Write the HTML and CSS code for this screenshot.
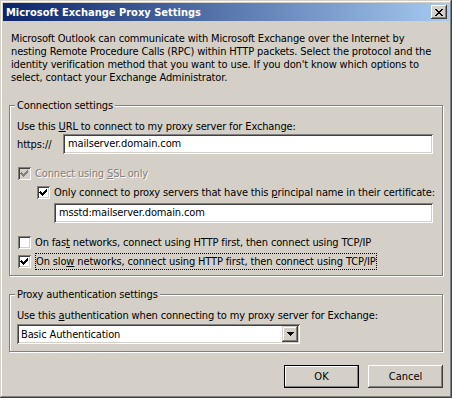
FILE: index.html
```html
<!DOCTYPE html>
<html lang="en">
<head>
    <meta charset="UTF-8">
    <title>Microsoft Exchange Proxy Settings</title>
    <link rel="stylesheet" href="styles.css">
</head>
<body>
<div class="window">
    <div class="titlebar">
        <span class="title">Microsoft Exchange Proxy Settings</span>
        <span class="close">
            <svg width="8" height="7" viewBox="0 0 8 7" shape-rendering="crispEdges">
                <path d="M0 0h2v1h1v1h2v-1h1v-1h2v1h-1v1h-1v1h-1v1h1v1h1v1h1v1h-2v-1h-1v-1h-2v1h-1v1h-2v-1h1v-1h1v-1h1v-1h-1v-1h-1v-1h-1z" fill="#000"/>
            </svg>
        </span>
    </div>

    <div class="content">
        <p class="intro">
            Microsoft Outlook can communicate with Microsoft Exchange over the Internet by<br>
            nesting Remote Procedure Calls (RPC) within HTTP packets. Select the protocol and the<br>
            identity verification method that you want to use. If you don't know which options to<br>
            select, contact your Exchange Administrator.
        </p>

        <fieldset class="group group-conn">
            <legend>Connection settings</legend>
            <div class="label">Use this <u>U</u>RL to connect to my proxy server for Exchange:</div>
            <div class="url-row">
                <span class="prefix">https://</span>
                <div class="field">mailserver.domain.com</div>
            </div>

            <div class="check check-ssl disabled">
                <span class="box">
                    <svg width="13" height="13" viewBox="0 0 13 13" shape-rendering="crispEdges"><path d="M3 5h1v1h1v1h1v-1h1v-1h1v-1h1v-1h1v3h-1v1h-1v1h-1v1h-1v1h-1v-1h-1v-1h-1v-1h-1z"/></svg>
                </span>
                <span>Connect using <u>S</u>SL only</span>
            </div>

            <div class="indent">
                <div class="check">
                    <span class="box">
                        <svg width="13" height="13" viewBox="0 0 13 13" shape-rendering="crispEdges"><path d="M3 5h1v1h1v1h1v-1h1v-1h1v-1h1v-1h1v3h-1v1h-1v1h-1v1h-1v1h-1v-1h-1v-1h-1v-1h-1z"/></svg>
                    </span>
                    <span>Only connect to proxy servers that have this <u>p</u>rincipal name in their certificate:</span>
                </div>
                <div class="field field-principal">msstd:mailserver.domain.com</div>
            </div>

            <div class="check check-fast">
                <span class="box"></span>
                <span>On fas<u>t</u> networks, connect using HTTP first, then connect using TCP/IP</span>
            </div>

            <div class="check check-slow">
                <span class="box">
                    <svg width="13" height="13" viewBox="0 0 13 13" shape-rendering="crispEdges"><path d="M3 5h1v1h1v1h1v-1h1v-1h1v-1h1v-1h1v3h-1v1h-1v1h-1v1h-1v1h-1v-1h-1v-1h-1v-1h-1z"/></svg>
                </span>
                <span class="focus">On slo<u>w</u> networks, connect using HTTP first, then connect using TCP/IP</span>
            </div>
        </fieldset>

        <fieldset class="group group-auth">
            <legend>Proxy authentication settings</legend>
            <div class="label">Use this <u>a</u>uthentication when connecting to my proxy server for Exchange:</div>
            <div class="select">
                <span class="select-text">Basic Authentication</span>
                <span class="drop">
                    <svg width="7" height="4" viewBox="0 0 7 4" shape-rendering="crispEdges"><path d="M0 0h7v1h-1v1h-1v1h-1v1h-1v-1h-1v-1h-1v-1h-1z"/></svg>
                </span>
            </div>
        </fieldset>

        <div class="buttons">
            <button class="btn btn-default">OK</button>
            <button class="btn">Cancel</button>
        </div>
    </div>
</div>
</body>
</html>
```

FILE: styles.css
```css
* {
    margin: 0;
    padding: 0;
    box-sizing: border-box;
}

body {
    background-color: #d4d0c8;
}

u {
    text-decoration: underline;
}

.window {
    width: 452px;
    height: 398px;
    padding: 3px;
    background-color: #d4d0c8;
    box-shadow: inset -1px -1px #404040, inset 1px 1px #d4d0c8, inset -2px -2px #808080, inset 2px 2px #fff;
    font-family: "DejaVu Sans Condensed", "DejaVu Sans", sans-serif;
    font-stretch: condensed;
    font-size: 11px;
    line-height: 13px;
    color: #000;
}

/* title bar */
.titlebar {
    height: 18px;
    display: flex;
    align-items: center;
    justify-content: space-between;
    padding: 0 2px;
    background: linear-gradient(to right, #0a246a, #a6caf0);
}

.title {
    padding-left: 1px;
    color: #fff;
    font-weight: bold;
}

.close {
    width: 16px;
    height: 14px;
    display: flex;
    align-items: center;
    justify-content: center;
    background-color: #d4d0c8;
    box-shadow: inset -1px -1px #404040, inset 1px 1px #fff, inset -2px -2px #808080;
}

/* dialog body */
.content {
    padding: 0 6px;
    letter-spacing: -0.14px;
}

.intro {
    margin-top: 11px;
    padding-left: 2px;
    white-space: nowrap;
}

.group {
    min-width: 0;
    border: 1px solid #808080;
    box-shadow: inset 1px 1px #fff, 1px 1px #fff;
    padding: 8px 9px 5px 7px;
}

.group legend {
    margin-left: -2px;
    padding: 0 2px;
    line-height: 13px;
    background-color: #d4d0c8;
}

.group-conn {
    margin-top: 15px;
}

.group-auth {
    margin-top: 12px;
    padding-bottom: 7px;
}

.url-row {
    display: flex;
    align-items: center;
    height: 20px;
    margin-top: 1px;
}

.prefix {
    width: 46px;
    flex: none;
}

.field {
    flex: 1;
    height: 20px;
    padding-left: 5px;
    line-height: 20px;
    background-color: #fff;
    box-shadow: inset 1px 1px #808080, inset -1px -1px #fff, inset 2px 2px #404040, inset -2px -2px #d4d0c8;
    white-space: nowrap;
}

/* check boxes */
.check {
    display: flex;
    align-items: center;
    height: 13px;
    margin-left: 1px;
    white-space: nowrap;
}

.box {
    width: 13px;
    height: 13px;
    flex: none;
    margin-right: 4px;
    background-color: #fff;
    box-shadow: inset 1px 1px #808080, inset -1px -1px #fff, inset 2px 2px #404040, inset -2px -2px #d4d0c8;
}

.box svg {
    display: block;
    fill: #000;
}

.disabled {
    color: #808080;
    text-shadow: 1px 1px #fff;
}

.disabled .box {
    background-color: #d4d0c8;
}

.disabled .box svg {
    fill: #808080;
}

.check-ssl {
    margin-top: 13px;
}

.indent {
    margin-top: 6px;
    margin-left: 19px;
}

.indent .check {
    margin-left: 1px;
}

.field-principal {
    height: 20px;
    margin-top: 4px;
    margin-left: 18px;
}

.check-fast {
    margin-top: 13px;
}

.check-slow {
    height: 17px;
    margin-top: 4px;
}

.focus {
    border: 1px dotted #000;
    padding: 1px 0;
}

/* combo box */
.select {
    width: 283px;
    height: 20px;
    margin-top: 2px;
    padding: 2px;
    display: flex;
    align-items: center;
    background-color: #fff;
    box-shadow: inset 1px 1px #808080, inset -1px -1px #fff, inset 2px 2px #404040, inset -2px -2px #d4d0c8;
}

.select-text {
    padding-left: 2px;
}

.drop {
    width: 16px;
    height: 16px;
    margin-left: auto;
    display: flex;
    align-items: center;
    justify-content: center;
    background-color: #d4d0c8;
    box-shadow: inset -1px -1px #404040, inset 1px 1px #d4d0c8, inset -2px -2px #808080, inset 2px 2px #fff;
}

.drop svg {
    display: block;
    fill: #000;
}

/* buttons */
.buttons {
    display: flex;
    justify-content: flex-end;
    gap: 9px;
    margin-top: 13px;
}

.btn {
    width: 75px;
    height: 23px;
    border: none;
    background-color: #d4d0c8;
    font: inherit;
    color: #000;
    box-shadow: inset -1px -1px #404040, inset 1px 1px #fff, inset -2px -2px #808080, inset 2px 2px #d4d0c8;
}

.btn-default {
    border: 1px solid #000;
    box-shadow: inset -1px -1px #808080, inset 1px 1px #fff;
}
```
